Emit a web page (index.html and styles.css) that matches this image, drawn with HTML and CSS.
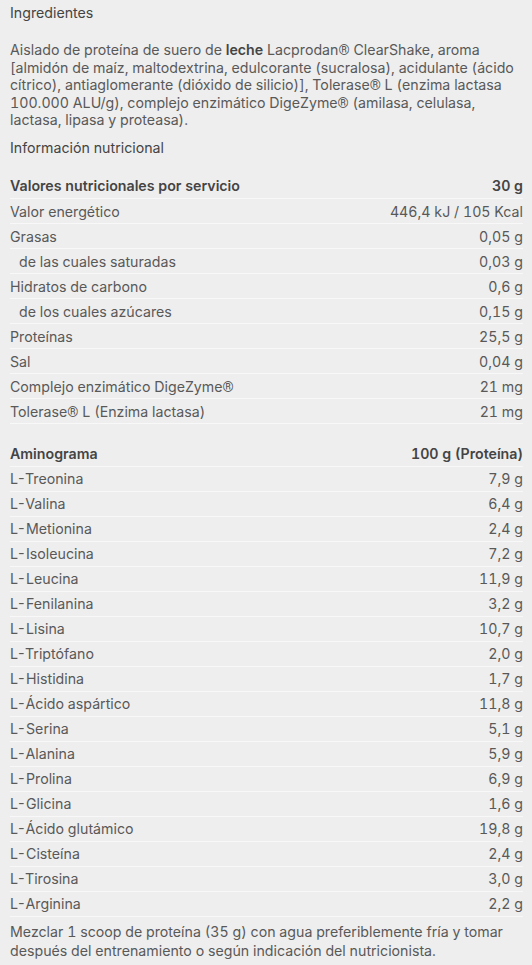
FILE: index.html
```html
<!DOCTYPE html>
<html lang="es">
<head>
    <meta charset="UTF-8">
    <meta name="viewport" content="width=device-width, initial-scale=1.0">
    <title>Ingredientes e información nutricional</title>
    <link rel="stylesheet" href="styles.css">
</head>
<body>
    <div class="product-info">
        <h2 class="section-title">Ingredientes</h2>
        <p class="ingredients">
            Aislado de proteína de suero de <strong>leche</strong> Lacprodan<span class="reg">®</span> ClearShake, aroma [almidón de maíz, maltodextrina, edulcorante (sucralosa), acidulante (ácido cítrico), antiaglomerante (dióxido de silicio)], Tolerase<span class="reg">®</span> L (enzima lactasa 100.000 ALU/g), complejo enzimático DigeZyme<span class="reg">®</span> (amilasa, celulasa, lactasa, lipasa y proteasa).
        </p>

        <h2 class="section-title">Información nutricional</h2>

        <table class="nutri-table">
            <thead>
                <tr><th>Valores nutricionales por servicio</th><th>30 g</th></tr>
            </thead>
            <tbody>
                <tr><td>Valor energético</td><td>446,4 kJ / 105 Kcal</td></tr>
                <tr><td>Grasas</td><td>0,05 g</td></tr>
                <tr class="sub"><td>de las cuales saturadas</td><td>0,03 g</td></tr>
                <tr><td>Hidratos de carbono</td><td>0,6 g</td></tr>
                <tr class="sub"><td>de los cuales azúcares</td><td>0,15 g</td></tr>
                <tr><td>Proteínas</td><td>25,5 g</td></tr>
                <tr><td>Sal</td><td>0,04 g</td></tr>
                <tr><td>Complejo enzimático DigeZyme<span class="reg">®</span></td><td>21 mg</td></tr>
                <tr><td>Tolerase<span class="reg">®</span> L (Enzima lactasa)</td><td>21 mg</td></tr>
            </tbody>
        </table>

        <table class="nutri-table amino">
            <thead>
                <tr><th>Aminograma</th><th>100 g (Proteína)</th></tr>
            </thead>
            <tbody>
                <tr><td>L-Treonina</td><td>7,9 g</td></tr>
                <tr><td>L-Valina</td><td>6,4 g</td></tr>
                <tr><td>L-Metionina</td><td>2,4 g</td></tr>
                <tr><td>L-Isoleucina</td><td>7,2 g</td></tr>
                <tr><td>L-Leucina</td><td>11,9 g</td></tr>
                <tr><td>L-Fenilanina</td><td>3,2 g</td></tr>
                <tr><td>L-Lisina</td><td>10,7 g</td></tr>
                <tr><td>L-Triptófano</td><td>2,0 g</td></tr>
                <tr><td>L-Histidina</td><td>1,7 g</td></tr>
                <tr><td>L-Ácido aspártico</td><td>11,8 g</td></tr>
                <tr><td>L-Serina</td><td>5,1 g</td></tr>
                <tr><td>L-Alanina</td><td>5,9 g</td></tr>
                <tr><td>L-Prolina</td><td>6,9 g</td></tr>
                <tr><td>L-Glicina</td><td>1,6 g</td></tr>
                <tr><td>L-Ácido glutámico</td><td>19,8 g</td></tr>
                <tr><td>L-Cisteína</td><td>2,4 g</td></tr>
                <tr><td>L-Tirosina</td><td>3,0 g</td></tr>
                <tr><td>L-Arginina</td><td>2,2 g</td></tr>
            </tbody>
        </table>

        <p class="usage">
            Mezclar 1 scoop de proteína (35 g) con agua preferiblemente fría y tomar después del entrenamiento o según indicación del nutricionista.
        </p>
    </div>
</body>
</html>
```

FILE: styles.css
```css
:root {
    --bg: #eeeeee;
    --text: #595959;
    --text-strong: #444444;
    --line: #f8f8f8;
}

* {
    box-sizing: border-box;
    margin: 0;
    padding: 0;
}

body {
    background: var(--bg);
    color: var(--text);
    font-family: Inter, "Liberation Sans", sans-serif;
    font-size: 14.2px;
    font-variant-numeric: tabular-nums;
}

.product-info {
    padding: 4px 9px 0 10px;
}

.section-title {
    font-size: 14.2px;
    font-weight: 400;
    line-height: 17px;
    color: var(--text-strong);
}

/* Roboto draws a full-size ® like the original */
.reg {
    font-family: Roboto, sans-serif;
    line-height: 10px;
}

.ingredients {
    margin-top: 20px;
    line-height: 17.5px;
}

.ingredients strong {
    font-weight: 600;
    color: var(--text-strong);
}

.ingredients + .section-title {
    margin-top: 10px;
}

.nutri-table {
    width: 100%;
    border-collapse: collapse;
    margin-top: 18px;
}

.nutri-table.amino {
    margin-top: 17px;
}

.nutri-table th,
.nutri-table td {
    height: 25px;
    padding: 0;
    line-height: 17px;
    text-align: left;
    vertical-align: middle;
    border-bottom: 1px solid var(--line);
    white-space: nowrap;
}

.nutri-table th {
    font-weight: 600;
    color: var(--text-strong);
}

.nutri-table th:last-child,
.nutri-table td:last-child {
    text-align: right;
}

.nutri-table .sub td:first-child {
    padding-left: 9px;
}

.usage {
    margin-top: 5px;
    line-height: 19px;
}
```
